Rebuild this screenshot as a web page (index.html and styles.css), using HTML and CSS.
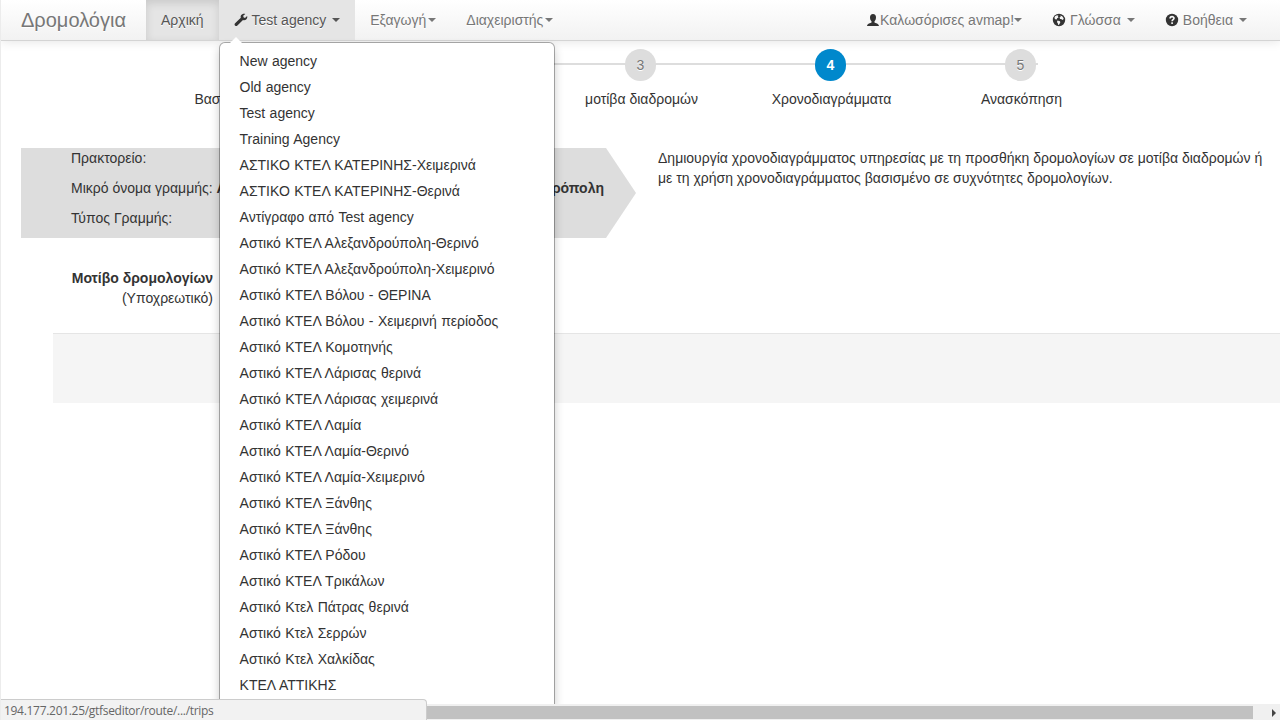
FILE: index.html
```html
<!DOCTYPE html>
<html lang="el">
<head>
<meta charset="utf-8">
<title>Δρομολόγια</title>
<link rel="stylesheet" href="styles.css">
</head>
<body>
<header class="navbar">
  <a class="brand">Δρομολόγια</a>
  <nav class="nav">
    <a class="item active">Αρχική</a>
    <div class="item open">
      <svg class="icon wrench" viewBox="0 0 14 14"><path d="M13.1 3.1 11 4.900 9.500 4.300 9.200 2.800 11.300.9C9.700.4 7.800.9 7 2.300c-.5.9-.5 1.700-.2 2.500L1.100 10.200c-.7.700-.7 1.700-.1 2.300.7.700 1.700.700 2.400 0L9 7.100c1.100.4 2.500.1 3.400-.8.8-.8 1.100-2.100.7-3.200z"/></svg>
      <span class="label">Test agency</span><b class="caret spaced"></b>
      <ul class="menu">
        <li>New agency</li>
        <li>Old agency</li>
        <li>Test agency</li>
        <li>Training Agency</li>
        <li>ΑΣΤΙΚΟ ΚΤΕΛ ΚΑΤΕΡΙΝΗΣ-Χειμερινά</li>
        <li>ΑΣΤΙΚΟ ΚΤΕΛ ΚΑΤΕΡΙΝΗΣ-Θερινά</li>
        <li>Αντίγραφο από Test agency</li>
        <li>Αστικό ΚΤΕΛ Αλεξανδρούπολη-Θερινό</li>
        <li>Αστικό ΚΤΕΛ Αλεξανδρούπολη-Χειμερινό</li>
        <li>Αστικό ΚΤΕΛ Βόλου - ΘΕΡΙΝΑ</li>
        <li>Αστικό ΚΤΕΛ Βόλου - Χειμερινή περίοδος</li>
        <li>Αστικό ΚΤΕΛ Κομοτηνής</li>
        <li>Αστικό ΚΤΕΛ Λάρισας θερινά</li>
        <li>Αστικό ΚΤΕΛ Λάρισας χειμερινά</li>
        <li>Αστικό ΚΤΕΛ Λαμία</li>
        <li>Αστικό ΚΤΕΛ Λαμία-Θερινό</li>
        <li>Αστικό ΚΤΕΛ Λαμία-Χειμερινό</li>
        <li>Αστικό ΚΤΕΛ Ξάνθης</li>
        <li>Αστικό ΚΤΕΛ Ξάνθης</li>
        <li>Αστικό ΚΤΕΛ Ρόδου</li>
        <li>Αστικό ΚΤΕΛ Τρικάλων</li>
        <li>Αστικό Κτελ Πάτρας θερινά</li>
        <li>Αστικό Κτελ Σερρών</li>
        <li>Αστικό Κτελ Χαλκίδας</li>
        <li>ΚΤΕΛ ΑΤΤΙΚΗΣ</li>
      </ul>
    </div>
    <a class="item">Εξαγωγή<b class="caret near"></b></a>
    <a class="item">Διαχειριστής<b class="caret near"></b></a>
  </nav>
  <nav class="nav right">
    <a class="item"><svg class="icon user" viewBox="0 0 14 14"><path d="M7 1C5 1 4 2.400 4 4.200c0 1.900.6 3.200 1.500 4v1.300C4.500 10.300 1.200 10.500 1 13h12c-.2-2.500-3.500-2.700-4.500-3.500V8.200c.9-.8 1.500-2.100 1.500-4C10 2.400 9 1 7 1z"/></svg>Καλωσόρισες avmap!<b class="caret"></b></a>
    <a class="item"><svg class="icon" viewBox="0 0 14 14"><circle cx="7" cy="7" r="6.200"/><path class="cut" d="m3 3.300 2-1.100 1.500.5-.7 1 .8.8-1.500.8-.4 1.200-1.500-.2L2.400 5zM8.200 2.500l2 .7 1.400 2-.1 1-1.300.9-.9-1-1.200-.1-.6-1.600 1.200-.7zM5.500 7.500l2.500.8.3 1.200L7 11.700l-.8.200-.4-1.700-.9-1.300z"/></svg><span class="label">Γλώσσα</span><b class="caret spaced"></b></a>
    <a class="item"><svg class="icon" viewBox="0 0 14 14"><circle cx="7" cy="7" r="6.200"/><path class="mark" d="M5.100 5.400c0-2.300 3.900-2.300 3.900-.1C9 6.700 7.100 6.700 7.100 8.300M7.100 9.300v1.700"/></svg><span class="label">Βοήθεια</span><b class="caret spaced"></b></a>
  </nav>
</header>
<main class="page">
  <ol class="wizard">
    <li class="step"><span class="num"></span>Βασικές πληροφορίες</li>
    <li class="step"><span class="num"></span></li>
    <li class="step"><span class="num">3</span>μοτίβα διαδρομών</li>
    <li class="step current"><span class="num">4</span>Χρονοδιαγράμματα</li>
    <li class="step"><span class="num">5</span>Ανασκόπηση</li>
  </ol>
  <section class="intro">
    <div class="summary">
      <p>Πρακτορείο:</p>
      <p class="route"><span>Μικρό όνομα γραμμής: <b>Α</b></span><b>Αλεξανδρόπολη</b></p>
      <p>Τύπος Γραμμής:</p>
    </div>
    <p class="help">Δημιουργία χρονοδιαγράμματος υπηρεσίας με τη προσθήκη δρομολογίων σε μοτίβα διαδρομών ή με τη χρήση χρονοδιαγράμματος βασισμένο σε συχνότητες δρομολογίων.</p>
  </section>
  <div class="field"><b>Μοτίβο δρομολογίων</b><span>(Υποχρεωτικό)</span></div>
  <div class="actions"></div>
</main>
<div class="scrollbar"><div class="thumb"></div><i class="arrow"></i></div>
<div class="status">194.177.201.25/gtfseditor/route/.../trips</div>
</body>
</html>
```
FILE: styles.css
```css
* { box-sizing: border-box; }
html { height: 100%; overflow: hidden; }
body {
  margin: 0;
  height: 720px;
  overflow: hidden;
  position: relative;
  display: flex;
  flex-direction: column;
  border-left: 1px solid #ececec;
  background: #fff;
  color: #333;
  font: 14px/20px "Liberation Sans", Arial, sans-serif;
}
p, ol, ul { margin: 0; padding: 0; list-style: none; }
.navbar {
  position: relative;
  z-index: 2;
  flex: none;
  height: 41px;
  display: flex;
  border-bottom: 1px solid #d4d4d4;
  background: linear-gradient(#fff, #f2f2f2);
  box-shadow: 0 1px 10px rgba(0, 0, 0, .1);
  color: #777;
  text-shadow: 0 1px 0 #fff;
}
.brand { width: 145px; padding: 10px 0 0 20px; font-size: 20px; }
.nav { display: flex; }
.right { margin-left: auto; margin-right: 18px; }
.item {
  position: relative;
  display: flex;
  height: 40px;
  padding: 10px 15px;
  white-space: nowrap;
}
.active { background: #e5e5e5; color: #555; box-shadow: inset 0 3px 8px rgba(0, 0, 0, .125); }
.open { background: #e5e5e5; color: #555; }
.icon { width: 14px; height: 14px; margin-top: 3px; fill: #333; }
.user { margin-left: -1px; }
.label { margin-left: 4px; }
.cut { fill: #f4f4f4; }
.mark { fill: none; stroke: #f8f8f8; stroke-width: 1.6; }
.caret {
  height: 0;
  margin-top: 8px;
  border: 4px solid transparent;
  border-top-color: #777;
  border-bottom: 0;
}
.near { margin-left: 2px; }
.spaced { margin-left: 6px; }
.open .caret { border-top-color: #555; }
.menu {
  position: absolute;
  top: 42px;
  left: 0;
  width: 336px;
  height: 662px;
  padding: 5px 0;
  border: 1px solid rgba(0, 0, 0, .3);
  border-bottom: 0;
  border-radius: 6px 6px 0 0;
  background: #fff;
  background-clip: padding-box;
  box-shadow: 0 5px 10px rgba(0, 0, 0, .2);
  color: #333;
  text-shadow: none;
  word-spacing: .5px;
}
.menu::before {
  content: "";
  position: absolute;
  top: -6px;
  left: 10px;
  border: 6px solid transparent;
  border-top: 0;
  border-bottom-color: #fff;
}
.menu li { padding: 3px 20px; }
.page { flex: 1; padding-top: 8px; }
.wizard { display: flex; width: 950px; margin-left: 165px; position: relative; }
.wizard::before {
  content: "";
  position: absolute;
  top: 14px;
  left: 76px;
  width: 796px;
  height: 2px;
  background: #ddd;
}
.step {
  position: relative;
  width: 190px;
  display: flex;
  flex-direction: column;
  align-items: center;
  gap: 8px;
  padding-left: 1px;
}
.num {
  width: 31px;
  height: 32px;
  margin-right: 2px;
  border-radius: 16px;
  background: #ddd;
  color: #777;
  line-height: 33px;
  text-align: center;
  text-shadow: 0 1px 0 #fff;
}
.current .num { background: #08c; color: #fff; text-shadow: none; font-weight: bold; }
.intro { display: flex; gap: 22px; margin: 39px 0 0 20px; }
.summary {
  width: 615px;
  height: 90px;
  padding-left: 50px;
  display: flex;
  flex-direction: column;
  gap: 10px;
  background: #ddd;
  clip-path: polygon(0 0, 585px 0, 100% 50%, 585px 100%, 0 100%);
}
.route { display: flex; justify-content: space-between; width: 533px; }
.help { width: 612px; }
.field {
  display: flex;
  flex-direction: column;
  align-items: flex-end;
  width: 212px;
  margin-top: 30px;
}
.actions {
  height: 70px;
  margin: 25px 0 0 52px;
  border-top: 1px solid #e5e5e5;
  background: #f5f5f5;
}
.scrollbar {
  position: relative;
  z-index: 3;
  flex: none;
  display: flex;
  height: 16px;
  padding-top: 2px;
  background: #f0f0f0;
}
.thumb { width: 1252px; height: 13px; background: #c1c1c1; }
.arrow {
  height: 0;
  margin: 3px 0 0 19px;
  border: 4px solid transparent;
  border-left-color: #444;
  border-right: 0;
}
.status {
  position: absolute;
  z-index: 4;
  left: -1px;
  bottom: 0;
  width: 427px;
  height: 21px;
  padding: 2px 4px;
  border: 1px solid #ccc;
  border-width: 1px 1px 0 0;
  border-radius: 0 4px 0 0;
  background: #f2f2f2;
  color: #666;
  font: 12px/18px "Open Sans", sans-serif;
  letter-spacing: -.3px;
}
```
